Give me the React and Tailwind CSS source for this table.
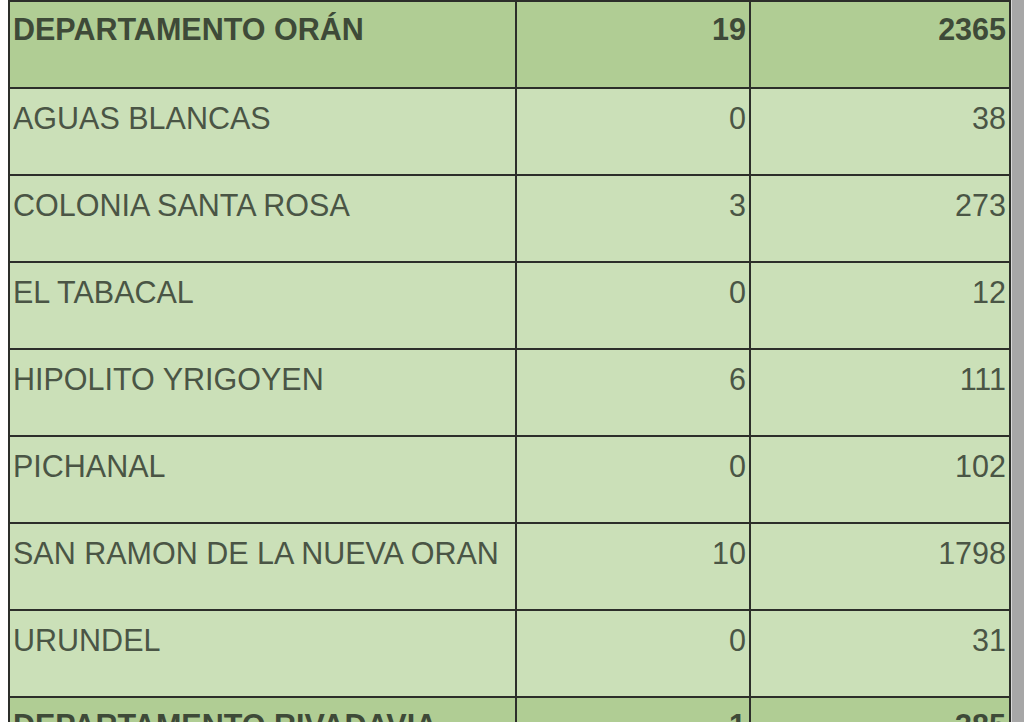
import React from "react";

const rows = [
  { name: "DEPARTAMENTO ORÁN", a: "19", b: "2365", bold: true },
  { name: "AGUAS BLANCAS", a: "0", b: "38" },
  { name: "COLONIA SANTA ROSA", a: "3", b: "273" },
  { name: "EL TABACAL", a: "0", b: "12" },
  { name: "HIPOLITO YRIGOYEN", a: "6", b: "111" },
  { name: "PICHANAL", a: "0", b: "102" },
  { name: "SAN RAMON DE LA NUEVA ORAN", a: "10", b: "1798" },
  { name: "URUNDEL", a: "0", b: "31" },
  { name: "DEPARTAMENTO RIVADAVIA", a: "1", b: "385", bold: true },
];

export default function App() {
  return (
    <div
      className="flex h-[722px] w-[1024px] overflow-hidden bg-white"
      style={{ fontFamily: '"Liberation Sans", Arial, sans-serif' }}
    >
      <div className="w-[8px] shrink-0 bg-white" />
      <div className="flex shrink-0 flex-col">
        <div className="h-[3px] bg-[#cce0b8]" />
        <div className="grid grid-cols-[507px_234px_260px] border-l-2 border-t-2 border-[#2c2e2a]">
          {rows.map((r, i) => {
            const bg = r.bold ? "bg-[#b0cd94]" : "bg-[#cbe0b8]";
            const txt = r.bold
              ? "font-bold text-[#3e4a38] pt-[10px]"
              : "font-normal text-[#4a5545] pt-[12px]";
            return (
              <React.Fragment key={i}>
                <div
                  className={`h-[87px] border-b-2 border-r-2 border-[#2c2e2a] pl-[3px] text-[30.5px] leading-[34px] whitespace-nowrap ${bg} ${txt}`}
                >
                  {r.name}
                </div>
                <div
                  className={`h-[87px] border-b-2 border-r-2 border-[#2c2e2a] pr-[3px] text-right text-[30.5px] leading-[34px] ${bg} ${txt}`}
                >
                  {r.a}
                </div>
                <div
                  className={`h-[87px] border-b-2 border-r-2 border-[#2c2e2a] pr-[3px] text-right text-[30.5px] leading-[34px] ${bg} ${txt}`}
                >
                  {r.b}
                </div>
              </React.Fragment>
            );
          })}
        </div>
      </div>
      <div className="w-[1px] shrink-0 bg-[#d8d8d8]" />
      <div className="flex-1 bg-[#a7a7a7]" />
    </div>
  );
}
